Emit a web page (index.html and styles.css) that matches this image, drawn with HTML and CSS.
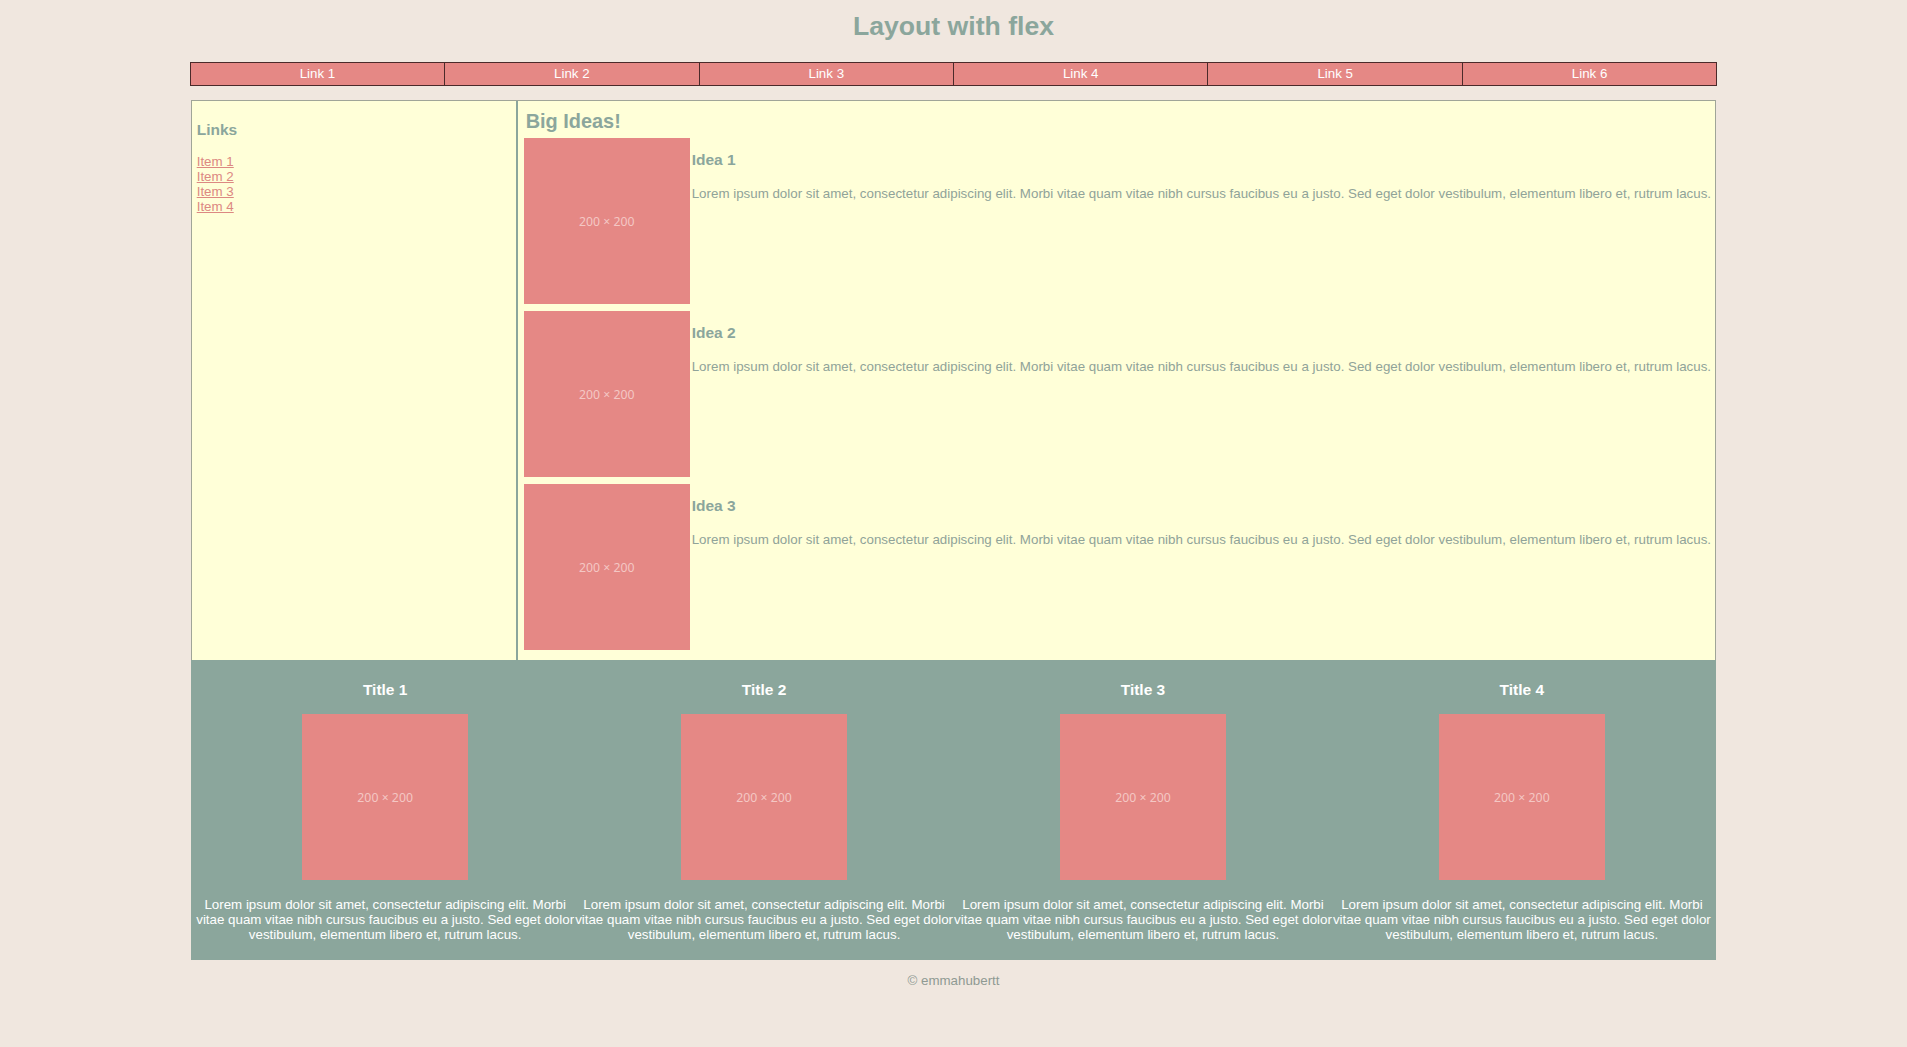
FILE: index.html
```html
<!DOCTYPE html>
<html lang="en">
<head>
<meta charset="utf-8">
<title>Layout with flex</title>
<link rel="stylesheet" href="styles.css">
</head>
<body>
<header class="site-header">
  <h1 class="site-title">Layout with flex</h1>
</header>
<nav class="nav">
  <a class="nav-link" href="#">Link 1</a>
  <a class="nav-link" href="#">Link 2</a>
  <a class="nav-link" href="#">Link 3</a>
  <a class="nav-link" href="#">Link 4</a>
  <a class="nav-link" href="#">Link 5</a>
  <a class="nav-link" href="#">Link 6</a>
</nav>
<main class="main">
  <aside class="sidebar">
    <h3 class="sidebar-title">Links</h3>
    <ul class="sidebar-list">
      <li><a class="sidebar-link" href="#">Item 1</a></li>
      <li><a class="sidebar-link" href="#">Item 2</a></li>
      <li><a class="sidebar-link" href="#">Item 3</a></li>
      <li><a class="sidebar-link" href="#">Item 4</a></li>
    </ul>
  </aside>
  <section class="ideas">
    <h2 class="ideas-title">Big Ideas!</h2>
    <article class="idea">
      <div class="ph">200 × 200</div>
      <div class="idea-body">
        <h3 class="idea-title">Idea 1</h3>
        <p class="idea-text">Lorem ipsum dolor sit amet, consectetur adipiscing elit. Morbi vitae quam vitae nibh cursus faucibus eu a justo. Sed eget dolor vestibulum, elementum libero et, rutrum lacus.</p>
      </div>
    </article>
    <article class="idea">
      <div class="ph">200 × 200</div>
      <div class="idea-body">
        <h3 class="idea-title">Idea 2</h3>
        <p class="idea-text">Lorem ipsum dolor sit amet, consectetur adipiscing elit. Morbi vitae quam vitae nibh cursus faucibus eu a justo. Sed eget dolor vestibulum, elementum libero et, rutrum lacus.</p>
      </div>
    </article>
    <article class="idea">
      <div class="ph">200 × 200</div>
      <div class="idea-body">
        <h3 class="idea-title">Idea 3</h3>
        <p class="idea-text">Lorem ipsum dolor sit amet, consectetur adipiscing elit. Morbi vitae quam vitae nibh cursus faucibus eu a justo. Sed eget dolor vestibulum, elementum libero et, rutrum lacus.</p>
      </div>
    </article>
  </section>
</main>
<section class="features">
  <div class="feature">
    <h3 class="feature-title">Title 1</h3>
    <div class="ph ph-center">200 × 200</div>
    <p class="feature-text">Lorem ipsum dolor sit amet, consectetur adipiscing elit. Morbi vitae quam vitae nibh cursus faucibus eu a justo. Sed eget dolor vestibulum, elementum libero et, rutrum lacus.</p>
  </div>
  <div class="feature">
    <h3 class="feature-title">Title 2</h3>
    <div class="ph ph-center">200 × 200</div>
    <p class="feature-text">Lorem ipsum dolor sit amet, consectetur adipiscing elit. Morbi vitae quam vitae nibh cursus faucibus eu a justo. Sed eget dolor vestibulum, elementum libero et, rutrum lacus.</p>
  </div>
  <div class="feature">
    <h3 class="feature-title">Title 3</h3>
    <div class="ph ph-center">200 × 200</div>
    <p class="feature-text">Lorem ipsum dolor sit amet, consectetur adipiscing elit. Morbi vitae quam vitae nibh cursus faucibus eu a justo. Sed eget dolor vestibulum, elementum libero et, rutrum lacus.</p>
  </div>
  <div class="feature">
    <h3 class="feature-title">Title 4</h3>
    <div class="ph ph-center">200 × 200</div>
    <p class="feature-text">Lorem ipsum dolor sit amet, consectetur adipiscing elit. Morbi vitae quam vitae nibh cursus faucibus eu a justo. Sed eget dolor vestibulum, elementum libero et, rutrum lacus.</p>
  </div>
</section>
<footer class="site-footer">
  <p class="copyright">© emmahubertt</p>
</footer>
</body>
</html>
```
FILE: styles.css
```css
html, body {
  margin: 0;
  padding: 0;
}
body {
  background: #f0e7df;
  font-family: "Liberation Sans", Arial, sans-serif;
  font-size: 13.33px;
  color: #8ba69c;
}
.site-header,
.nav,
.main,
.features {
  width: 80%;
  margin-left: auto;
  margin-right: auto;
}
.site-title {
  margin: 11px 0 20px;
  font-size: 26.6px;
  line-height: 31px;
  text-align: center;
  color: #8ba69c;
}
.nav {
  display: flex;
  border: 1px solid #4b2a2a;
  background: #e58885;
}
.nav-link {
  flex: 1 1 0;
  text-align: center;
  color: #ffffff;
  text-decoration: none;
  line-height: 22px;
}
.nav-link + .nav-link {
  border-left: 1px solid #4b2a2a;
}
.main {
  margin-top: 14px;
  display: flex;
  background: #ffffd8;
  border: 1px solid #a0a598;
  border-bottom: none;
  box-sizing: border-box;
}
.sidebar {
  width: 314px;
  flex: 0 0 auto;
  padding: 5px;
  border-right: 2px solid #8ba69c;
}
.sidebar-title {
  margin: 14.5px 0 15.5px;
  font-size: 15.5px;
}
.sidebar-list {
  list-style: none;
  margin: 0;
  padding: 0;
}
.sidebar-link {
  color: #dc8882;
  text-decoration: underline;
}
.ideas {
  flex: 1 1 auto;
  min-width: 0;
  padding: 9px 0 10px 6px;
}
.ideas-title {
  margin: 0 0 5px;
  padding-left: 2px;
  font-size: 19.9px;
  line-height: 23px;
}
.idea {
  display: flex;
  align-items: flex-start;
}
.idea + .idea {
  margin-top: 7px;
}
.ph {
  width: 166px;
  height: 166px;
  flex: 0 0 auto;
  background: #e58885;
  color: #f4c7c4;
  font-family: "Noto Sans", "Open Sans", sans-serif;
  font-size: 12.3px;
  display: flex;
  align-items: center;
  justify-content: center;
}
.ph-center {
  margin: 0 auto;
}
.idea-body {
  margin-left: 2px;
  flex: 1 1 auto;
  min-width: 0;
}
.idea-title {
  margin: 13px 0 17px;
  font-size: 15.5px;
}
.idea-text {
  margin: 0;
  color: #90a399;
}
.features {
  display: flex;
  padding: 5px;
  box-sizing: border-box;
  background: #8ba69c;
  color: #ffffff;
}
.feature {
  flex: 1 1 0;
  min-width: 0;
  text-align: center;
}
.feature-title {
  margin: 15.5px 0;
  font-size: 15.5px;
}
.feature-text {
  margin: 16.5px 0 13.3px;
}
.site-footer {
  text-align: center;
}
.copyright {
  margin: 13.3px 0;
  color: #8f9a93;
}
```
